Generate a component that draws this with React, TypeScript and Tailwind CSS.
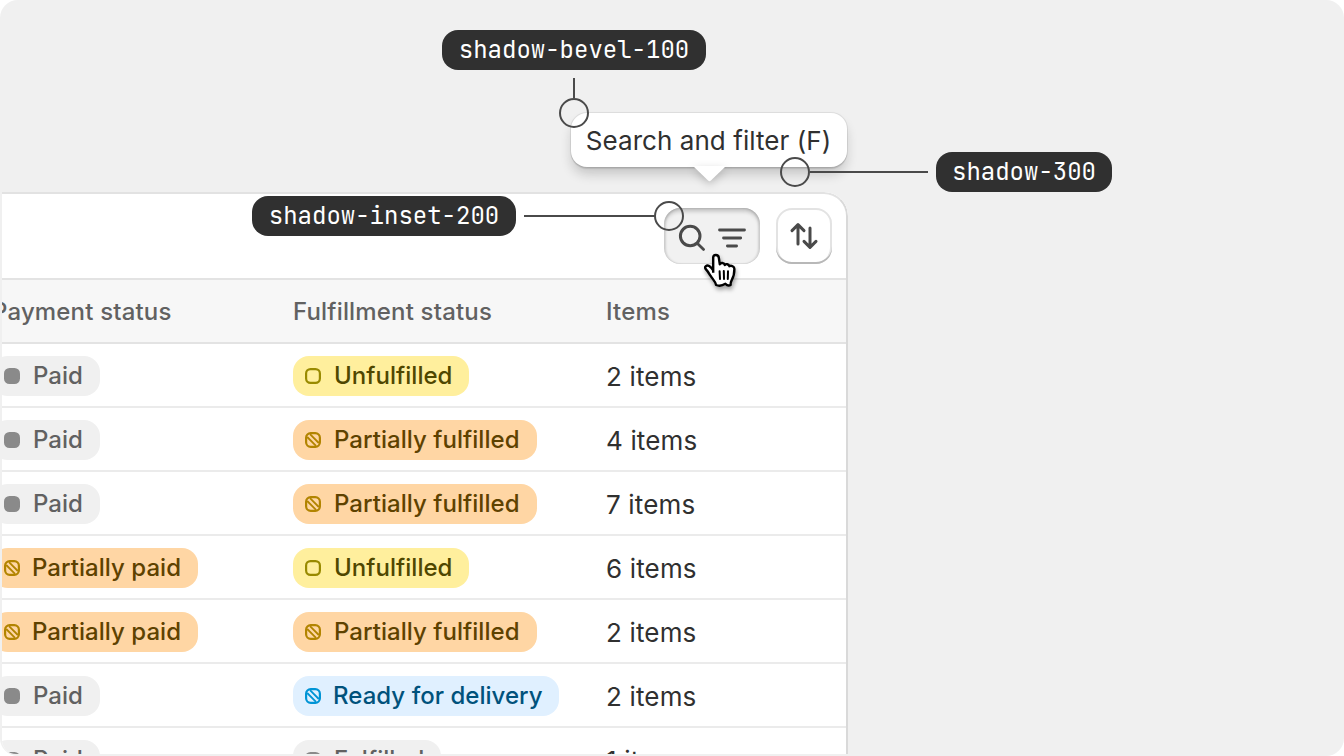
import React from 'react';

type Tone = 'neutral' | 'open' | 'partial' | 'info';

const toneClass: Record<Tone, string> = {
  neutral: 'bg-[#f0f0f0] text-[#616161]',
  open: 'bg-[#ffef9d] text-[#4f4700]',
  partial: 'bg-[#ffd6a4] text-[#5e4200]',
  info: 'bg-[#e0f0ff] text-[#00527c]',
};

function StatusPip({ tone }: { tone: Tone }) {
  if (tone === 'neutral') {
    return (
      <svg width="16" height="16" viewBox="0 0 16 16" className="shrink-0">
        <rect width="16" height="16" rx="5.5" fill="#8a8a8a" />
      </svg>
    );
  }
  if (tone === 'open') {
    return (
      <svg width="16" height="16" viewBox="0 0 16 16" className="shrink-0">
        <rect x="1.1" y="1.1" width="13.8" height="13.8" rx="4.4" fill="none" stroke="#998a00" strokeWidth="2.2" />
      </svg>
    );
  }
  const color = tone === 'partial' ? '#b28400' : '#0094d5';
  return (
    <svg width="16" height="16" viewBox="0 0 16 16" className="shrink-0" fill="none" stroke={color}>
      <rect x="1.1" y="1.1" width="13.8" height="13.8" rx="4.6" strokeWidth="2.2" />
      <path d="M5 2.2 13.8 11M2.2 5 11 13.8" strokeWidth="1.8" />
    </svg>
  );
}

type BadgeProps = { tone: Tone; label: string; width: string; gap?: string };

function Badge({ tone, label, width, gap = 'gap-[13px]' }: BadgeProps) {
  return (
    <span
      className={`flex h-10 items-center rounded-2xl pl-3 text-[24px] leading-10 font-medium tracking-[0.04px] whitespace-nowrap ${gap} ${toneClass[tone]} ${width}`}
    >
      <StatusPip tone={tone} />
      <span>{label}</span>
    </span>
  );
}

const paid: BadgeProps = { tone: 'neutral', label: 'Paid', width: 'w-[108px]' };
const partPaid: BadgeProps = { tone: 'partial', label: 'Partially paid', width: 'w-[206px]', gap: 'gap-3' };
const unfulfilled: BadgeProps = { tone: 'open', label: 'Unfulfilled', width: 'w-[176px]' };
const partial: BadgeProps = { tone: 'partial', label: 'Partially fulfilled', width: 'w-[244px]' };
const ready: BadgeProps = { tone: 'info', label: 'Ready for delivery', width: 'w-[266px]', gap: 'gap-3' };
const fulfilled: BadgeProps = { tone: 'neutral', label: 'Fulfilled', width: 'w-[148px]' };

const rows = [
  { payment: paid, fulfillment: unfulfilled, items: '2 items' },
  { payment: paid, fulfillment: partial, items: '4 items' },
  { payment: paid, fulfillment: partial, items: '7 items' },
  { payment: partPaid, fulfillment: unfulfilled, items: '6 items' },
  { payment: partPaid, fulfillment: partial, items: '2 items' },
  { payment: paid, fulfillment: ready, items: '2 items' },
  { payment: paid, fulfillment: fulfilled, items: '1 item' },
];

function Token({ children, className }: { children: string; className: string }) {
  return (
    <div
      className={`absolute flex h-10 items-center justify-center rounded-2xl bg-[#303030] font-['JetBrains_Mono','DejaVu_Sans_Mono',monospace] text-[24px] leading-10 whitespace-nowrap text-white ${className}`}
    >
      {children}
    </div>
  );
}

function Tooltip() {
  return (
    <div className="absolute top-[113px] left-[571px] flex h-[54px] w-[276px] items-center justify-center rounded-2xl bg-white text-[26px] tracking-[0.06px] text-[#303030] shadow-[0_8px_12px_-1px_rgba(26,26,26,0.2),0_0_0_1px_rgba(0,0,0,0.07),0_2px_1px_rgba(0,0,0,0.1)]">
      <span className="-ml-px whitespace-nowrap">Search and filter (F)</span>
      <svg width="40" height="24" viewBox="0 0 40 24" className="absolute top-[53px] left-[118px] overflow-visible drop-shadow-[0_3px_4px_rgba(0,0,0,0.2)]">
        <path d="M4 0H37L21.9 14.6Q20.5 15.9 19.1 14.6Z" fill="#fff" />
      </svg>
    </div>
  );
}

function Connectors() {
  return (
    <svg width="1344" height="756" viewBox="0 0 1344 756" className="pointer-events-none absolute inset-0" fill="none" stroke="#4a4a4a" strokeWidth="2">
      <path d="M574 78V98M810 172H928M524 216H655" />
      <circle cx="574" cy="113" r="14" />
      <circle cx="795" cy="172" r="14" />
      <circle cx="669" cy="216" r="14" />
    </svg>
  );
}

function HandCursor() {
  return (
    <svg width="36" height="38" viewBox="0 0 36 38" className="absolute top-[252px] left-[703px] overflow-visible drop-shadow-[1px_3px_2px_rgba(0,0,0,0.35)]">
      <path
        d="M10.2 20.8V5.6C10.2 2.1 15.4 2.1 15.8 5.6L16.8 12.2C17.6 10.4 21.3 10.7 21.8 13C22.8 11.5 25.9 12 26.4 14.2C28.2 13.2 31.4 14.4 31.4 17C31.4 21.8 30.6 24.8 28.8 27.8C27.9 29.3 27.6 30.5 27.6 33Q25 34.6 22.4 31.8Q17.5 34.8 13.1 33C12.5 29.7 10.1 27.6 7.8 24.2C6.1 21.6 4.7 19.2 2.8 17.2C1 14.6 3.8 12.4 6.2 14.1C7.9 15.3 9.2 16.8 10.2 18.4"
        fill="#fff"
        stroke="#000"
        strokeWidth="2.4"
        strokeLinejoin="round"
      />
      <path d="M16.6 19.2 17 27M20.8 19 21 27M25 19.2 24.8 27" stroke="#000" strokeWidth="2" strokeLinecap="round" />
    </svg>
  );
}

function Toolbar() {
  return (
    <div className="flex h-[86px] justify-end gap-4 border-b-2 border-[#e3e3e3] pt-[14px] pr-4">
      <div className="flex h-14 w-24 rounded-2xl bg-[#f1f1f1] shadow-[inset_0_4px_4px_-1px_rgba(26,26,26,0.26),inset_2px_0_2px_rgba(0,0,0,0.1),inset_-2px_0_2px_rgba(0,0,0,0.1),inset_0_-1px_0_rgba(0,0,0,0.03)]">
        <svg width="96" height="56" viewBox="0 0 96 56" fill="none" stroke="#4a4a4a" strokeWidth="3" strokeLinecap="round">
          <circle cx="26.2" cy="28" r="9.8" />
          <path d="M33.2 35.2 39.6 41.4M55.5 22H80.5M59.5 30H76.7M63.4 38H72.6" strokeWidth="2.8" />
        </svg>
      </div>
      <div className="flex h-14 w-14 rounded-2xl bg-white shadow-[inset_0_-2px_0_#b8b8b8,inset_0_0_0_2px_#e3e3e3]">
        <svg width="56" height="56" viewBox="0 0 56 56" fill="none" stroke="#4a4a4a" strokeWidth="3" strokeLinecap="round" strokeLinejoin="round">
          <path d="M22 36V17M16 22.6 22 16.6 28 22.6M34 20V39M28 33.4 34 39.4 40 33.4" />
        </svg>
      </div>
    </div>
  );
}

const gridClass = 'ml-[-10px] grid w-[856px] grid-cols-[301px_313px_1fr]';

export default function App() {
  return (
    <div className="h-[756px] w-[1344px] bg-white font-['Inter',sans-serif]">
      <div className="relative h-full w-full overflow-hidden rounded-[18px] bg-[#f0f0f0] pt-[192px] pl-[2px]">
        <div className="relative h-[562px] w-[846px] overflow-hidden rounded-tr-[24px] rounded-bl-[14px] bg-white pt-[2px] after:pointer-events-none after:absolute after:inset-0 after:rounded-tr-[24px] after:border-t-2 after:border-r-2 after:border-t-[#e2e2e2] after:border-r-[#d9d9d9]">
          <Toolbar />
          <div className="h-16 border-b-2 border-[#e3e3e3] bg-[#f7f7f7]">
            <div className={`${gridClass} text-[24px] leading-[64px] font-medium tracking-[0.17px] text-[#616161]`}>
              <span>Payment status</span>
              <span>Fulfillment status</span>
              <span>Items</span>
            </div>
          </div>
          {rows.map((row, i) => (
            <div key={i} className="h-16 border-b-2 border-[#ebebeb]">
              <div className={`${gridClass} pt-3`}>
                <Badge {...row.payment} />
                <Badge {...row.fulfillment} />
                <span className="text-[26px] leading-[42px] tracking-[0.15px] text-[#303030]">{row.items}</span>
              </div>
            </div>
          ))}
        </div>
        <Tooltip />
        <Token className="top-[30px] left-[442px] w-[264px]">shadow-bevel-100</Token>
        <Token className="top-[196px] left-[252px] w-[264px]">shadow-inset-200</Token>
        <Token className="top-[152px] left-[936px] w-[176px]">shadow-300</Token>
        <Connectors />
        <HandCursor />
      </div>
    </div>
  );
}
